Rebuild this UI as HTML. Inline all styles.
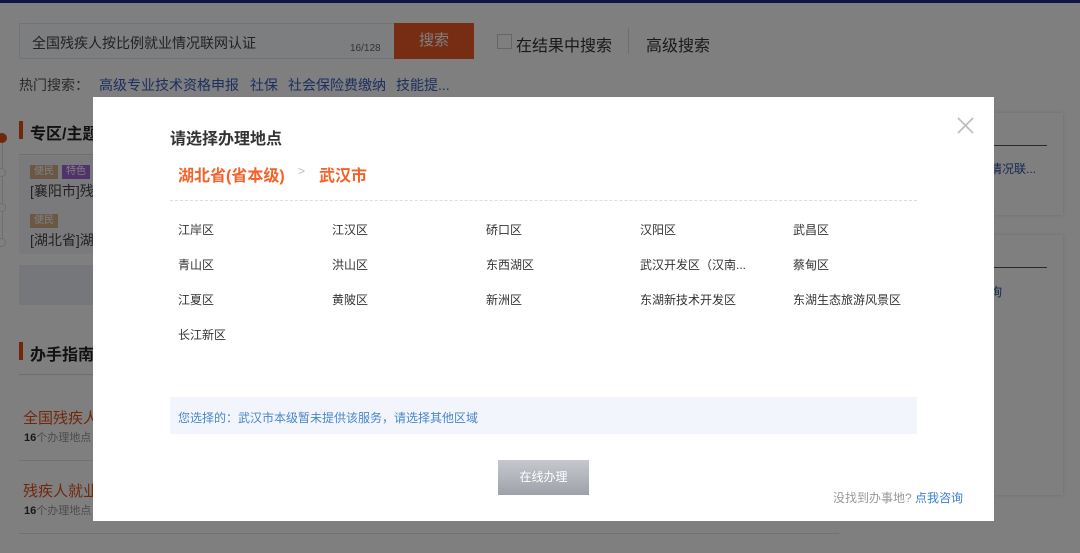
<!DOCTYPE html>
<html><head><meta charset="utf-8"><style>
*{margin:0;padding:0;box-sizing:border-box}
body{width:1080px;height:553px;overflow:hidden;position:relative;background:#fff;font-family:"Liberation Sans","Noto Sans CJK SC",sans-serif;color:#333}
.a{position:absolute;white-space:nowrap}
.ov{position:absolute;left:0;top:0;width:1080px;height:553px;background:rgba(0,0,0,.5)}
.m{position:absolute;left:93px;top:97px;width:901px;height:424px;background:#fff}
.d{position:absolute;font-size:12px;color:#333;white-space:nowrap}
.h{position:absolute;top:75px;font-size:14px;color:#3a5dc0;white-space:nowrap}
</style></head><body>
<div class="a" style="left:0;top:0;width:1080px;height:3px;background:#1d2a8c"></div>
<div class="a" style="left:19px;top:23px;width:376px;height:36px;background:#fbfcff;border:1px solid #e3e6ee"></div>
<div class="a" style="left:32px;top:33px;font-size:14px;color:#444">全国残疾人按比例就业情况联网认证</div>
<div class="a" style="left:350px;top:43px;font-size:10px;color:#666">16/128</div>
<div class="a" style="left:394px;top:23px;width:80px;height:36px;background:#ee5a24;color:#fff;font-size:15px;text-align:center;line-height:36px">搜索</div>
<div class="a" style="left:497px;top:34px;width:15px;height:15px;border:1px solid #ccc;background:#fff"></div>
<div class="a" style="left:516px;top:32px;font-size:16px;color:#333">在结果中搜索</div>
<div class="a" style="left:628px;top:28px;width:1px;height:26px;background:#ddd"></div>
<div class="a" style="left:646px;top:32px;font-size:16px;color:#333">高级搜索</div>
<div class="a" style="left:19px;top:75px;font-size:14px;color:#555">热门搜索：</div>
<div class="h" style="left:99px">高级专业技术资格申报</div>
<div class="h" style="left:250px">社保</div>
<div class="h" style="left:288px">社会保险费缴纳</div>
<div class="h" style="left:396px">技能提...</div>
<div class="a" style="left:19px;top:121px;width:4px;height:18px;background:#e0501a"></div>
<div class="a" style="left:30px;top:120px;font-size:16px;font-weight:bold;color:#222">专区/主题</div>
<div class="a" style="left:19px;top:154px;width:820px;height:1px;background:#ddd"></div>
<div class="a" style="left:2px;top:140px;width:1px;height:105px;background:#ddd"></div>
<div class="a" style="left:-3px;top:133px;width:10px;height:10px;border-radius:50%;background:#e0501a"></div>
<div class="a" style="left:-3px;top:168px;width:9px;height:9px;border-radius:50%;background:#fff;border:1px solid #ddd"></div>
<div class="a" style="left:-3px;top:203px;width:9px;height:9px;border-radius:50%;background:#fff;border:1px solid #ddd"></div>
<div class="a" style="left:-3px;top:238px;width:9px;height:9px;border-radius:50%;background:#fff;border:1px solid #ddd"></div>
<div class="a" style="left:19px;top:156px;width:820px;height:98px;background:#f4f5f8"></div>
<div class="a" style="left:30px;top:165px;width:28px;height:14px;background:#d4b08a;color:#fff;font-size:10px;text-align:center;line-height:14px">便民</div>
<div class="a" style="left:62px;top:165px;width:28px;height:14px;background:#a266d8;color:#fff;font-size:10px;text-align:center;line-height:14px">特色</div>
<div class="a" style="left:30px;top:181px;font-size:14px;color:#444">[襄阳市]残</div>
<div class="a" style="left:30px;top:214px;width:28px;height:14px;background:#d4b08a;color:#fff;font-size:10px;text-align:center;line-height:14px">便民</div>
<div class="a" style="left:30px;top:230px;font-size:14px;color:#444">[湖北省]湖</div>
<div class="a" style="left:19px;top:265px;width:820px;height:40px;background:#eceef4"></div>
<div class="a" style="left:19px;top:342px;width:4px;height:18px;background:#e0501a"></div>
<div class="a" style="left:30px;top:341px;font-size:16px;font-weight:bold;color:#222">办手指南</div>
<div class="a" style="left:19px;top:374px;width:820px;height:1px;background:#ddd"></div>
<div class="a" style="left:23px;top:407px;font-size:15px;color:#e0501a">全国残疾人</div>
<div class="a" style="left:24px;top:429px;font-size:11px;color:#999"><b style="color:#333">16</b>个办理地点</div>
<div class="a" style="left:19px;top:460px;width:820px;height:1px;background:#e4e4e4"></div>
<div class="a" style="left:23px;top:480px;font-size:15px;color:#e0501a">残疾人就业</div>
<div class="a" style="left:24px;top:502px;font-size:11px;color:#999"><b style="color:#333">16</b>个办理地点</div>
<div class="a" style="left:19px;top:533px;width:820px;height:1px;background:#e4e4e4"></div>
<div class="a" style="left:960px;top:113px;width:103px;height:102px;background:#fff;box-shadow:0 0 4px rgba(0,0,0,.15)"></div>
<div class="a" style="left:960px;top:145px;width:87px;height:1px;background:#555"></div>
<div class="a" style="left:990px;top:160px;font-size:12px;color:#2a4fa0">情况联...</div>
<div class="a" style="left:960px;top:235px;width:103px;height:260px;background:#fff;box-shadow:0 0 4px rgba(0,0,0,.15)"></div>
<div class="a" style="left:960px;top:267px;width:87px;height:1px;background:#555"></div>
<div class="a" style="left:990px;top:283px;font-size:12px;color:#2a4fa0">询</div>
<div class="ov"></div>
<div class="m">
<div class="a" style="left:77px;top:28px;font-size:16px;font-weight:bold;color:#333">请选择办理地点</div>
<div class="a" style="left:85px;top:65px;font-size:16px;font-weight:bold;color:#f4622a">湖北省(省本级)</div>
<div class="a" style="left:205px;top:67px;font-size:12px;color:#bbb">&gt;</div>
<div class="a" style="left:226px;top:65px;font-size:16px;font-weight:bold;color:#f4622a">武汉市</div>
<div class="a" style="left:77px;top:103px;width:747px;border-top:1px dashed #ddd"></div>
<div class="d" style="left:85px;top:124px">江岸区</div><div class="d" style="left:239px;top:124px">江汉区</div><div class="d" style="left:393px;top:124px">硚口区</div><div class="d" style="left:547px;top:124px">汉阳区</div><div class="d" style="left:700px;top:124px">武昌区</div>
<div class="d" style="left:85px;top:159px">青山区</div><div class="d" style="left:239px;top:159px">洪山区</div><div class="d" style="left:393px;top:159px">东西湖区</div><div class="d" style="left:547px;top:159px">武汉开发区（汉南...</div><div class="d" style="left:700px;top:159px">蔡甸区</div>
<div class="d" style="left:85px;top:194px">江夏区</div><div class="d" style="left:239px;top:194px">黄陂区</div><div class="d" style="left:393px;top:194px">新洲区</div><div class="d" style="left:547px;top:194px">东湖新技术开发区</div><div class="d" style="left:700px;top:194px">东湖生态旅游风景区</div>
<div class="d" style="left:85px;top:229px">长江新区</div>
<div class="a" style="left:77px;top:300px;width:747px;height:37px;background:#f2f6fc"></div>
<div class="d" style="left:85px;top:312px;color:#4a86c8">您选择的：武汉市本级暂未提供该服务，请选择其他区域</div>
<div class="a" style="left:405px;top:363px;width:91px;height:35px;background:linear-gradient(#c6c8ce,#9ea1a8);color:#fff;font-size:12px;text-align:center;line-height:35px">在线办理</div>
<div class="d" style="left:740px;top:392px;color:#999">没找到办事地? <span style="color:#3a7fd0">点我咨询</span></div>
<svg class="a" style="left:864px;top:20px" width="17" height="17" viewBox="0 0 17 17"><path d="M1 1L16 16M16 1L1 16" stroke="#bbb" stroke-width="1.6"/></svg>
</div>
</body></html>
